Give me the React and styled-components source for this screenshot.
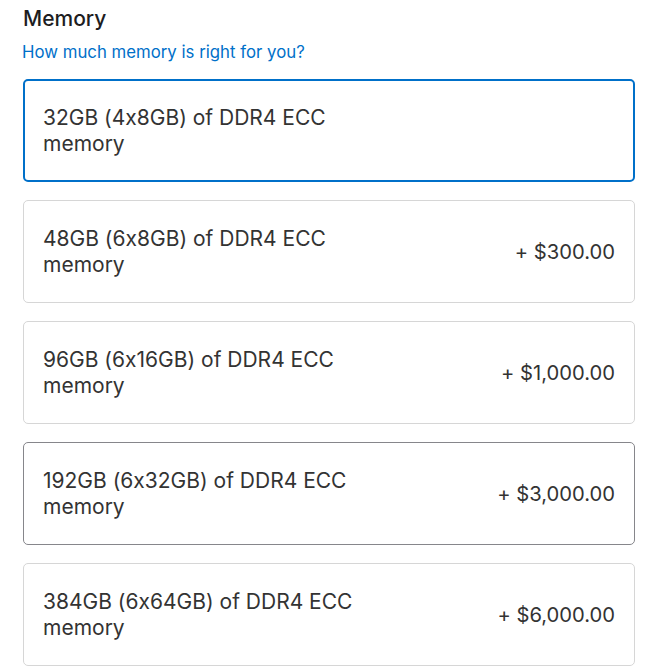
import React from 'react'
import styled, { createGlobalStyle } from 'styled-components'

const GlobalStyle = createGlobalStyle`
    body {
        margin: 0;
        background: #fff;
        font-family: Inter, "Liberation Sans", Arial, sans-serif;
        font-feature-settings: "calt" 0;
        color: #333;
    }
`

const Section = styled.section`
    padding: 5px 14px 0 23px;
`

const Title = styled.h2`
    margin: 0;
    font-size: 21px;
    font-weight: 500;
    line-height: 28px;
    color: #1d1d1f;
`

const HelpLink = styled.a`
    display: inline-block;
    margin-top: 8px;
    margin-left: -1px;
    font-size: 16.8px;
    line-height: 22px;
    color: #0070c9;
    text-decoration: none;
`

const OptionList = styled.div`
    display: flex;
    flex-direction: column;
    gap: 18px;
    margin-top: 16px;
`

// selected option gets a thicker blue border, hovered one a darker grey
const Option = styled.div`
    box-sizing: border-box;
    min-height: 103px;
    display: flex;
    align-items: center;
    justify-content: space-between;
    padding: 0 19px;
    border-radius: 5px;
    border: ${p => p.selected ? '2px solid #0070c9' : p.hover ? '1px solid #86868b' : '1px solid #d6d6d6'};
    padding-left: ${p => p.selected ? '18px' : '19px'};
    background: #fff;
`

const Label = styled.div`
    max-width: 350px;
    font-size: 21px;
    line-height: 26px;
    font-weight: 400;
    color: #333;
`

const Price = styled.div`
    font-size: 20.2px;
    line-height: 26px;
    color: #333;
    white-space: nowrap;
`

const options = [
    { label: '32GB (4x8GB) of DDR4 ECC memory', price: '', selected: true },
    { label: '48GB (6x8GB) of DDR4 ECC memory', price: '+ $300.00' },
    { label: '96GB (6x16GB) of DDR4 ECC memory', price: '+ $1,000.00' },
    { label: '192GB (6x32GB) of DDR4 ECC memory', price: '+ $3,000.00', hover: true },
    { label: '384GB (6x64GB) of DDR4 ECC memory', price: '+ $6,000.00' },
]

const App = () => (
    <>
        <GlobalStyle />
        <Section>
            <Title>Memory</Title>
            <HelpLink href="#">How much memory is right for you?</HelpLink>
            <OptionList>
                {options.map(o => (
                    <Option key={o.label} selected={o.selected} hover={o.hover}>
                        <Label>{o.label}</Label>
                        {o.price && <Price>{o.price}</Price>}
                    </Option>
                ))}
            </OptionList>
        </Section>
    </>
)

export default App
